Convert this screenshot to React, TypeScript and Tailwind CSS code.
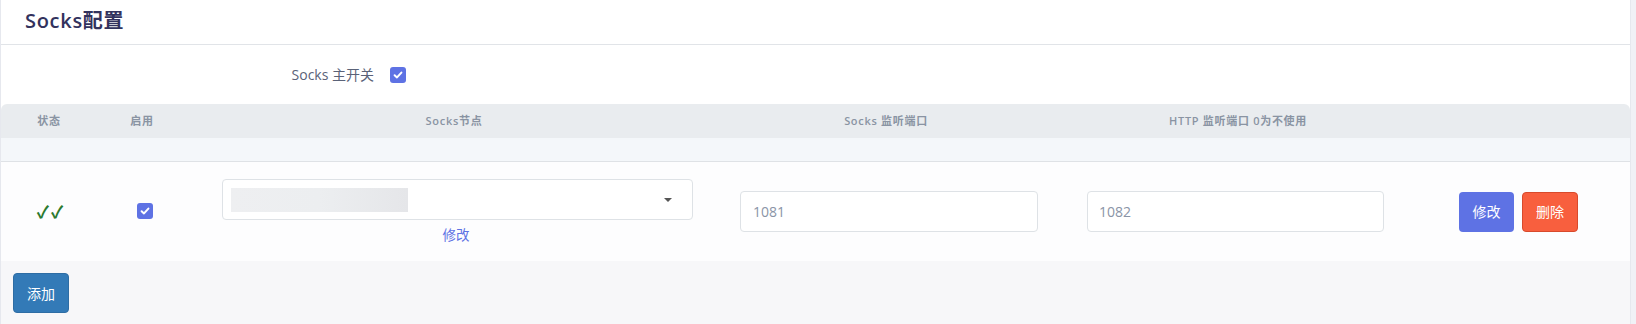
import React from "react";

const font = { fontFamily: '"Open Sans", "Noto Sans CJK SC", sans-serif' };

function Check({ className = "" }: { className?: string }) {
  return (
    <span className={`flex h-4 w-4 items-center justify-center rounded-[3px] bg-[#5e72e4] ${className}`}>
      <svg width="10" height="10" viewBox="0 0 10 10">
        <path d="M1.6 5.2 L4 7.4 L8.4 2.6" fill="none" stroke="white" strokeWidth="2" strokeLinecap="round" strokeLinejoin="round" />
      </svg>
    </span>
  );
}

export default function App() {
  return (
    <div className="h-[324px] w-[1636px] bg-[#f0f1f6]" style={font}>
      <div className="w-[1631px] h-[324px] border-l border-r border-[#e6e8ee] bg-white flex flex-col">
        <div className="h-[45px] border-b border-[#e1e4e8] flex items-center pl-[24px]">
          <span className="text-[20px] font-semibold text-[#32325d] tracking-[0.7px] leading-none mt-[-2px]">Socks配置</span>
        </div>
        <div className="h-[59px] flex items-center">
          <span className="w-[373px] text-right text-[14px] text-[#5a6278]">Socks 主开关</span>
          <Check className="ml-[16px]" />
        </div>
        <div className="h-[34px] bg-[#e9ecef] rounded-t-[6px] flex items-center text-[11px] font-semibold text-[#8a94a3] tracking-[0.7px]">
          <div className="w-[96px] text-center">状态</div>
          <div className="w-[90px] text-center">启用</div>
          <div className="w-[534px] text-center">Socks节点</div>
          <div className="w-[330px] text-center">Socks 监听端口</div>
          <div className="w-[374px] text-center">HTTP 监听端口 0为不使用</div>
        </div>
        <div className="h-[24px] bg-[#f4f7fa] border-b border-[#dfe2e6]" />
        <div className="h-[99px] bg-[#fdfdfe] flex items-center">
          <div className="w-[98px] flex justify-center gap-[2px] text-[#2b7a30] text-[17px] font-semibold pt-[1px]">
            <span>✓</span>
            <span>✓</span>
          </div>
          <div className="w-[92px] flex justify-center">
            <Check className="mt-[-2px]" />
          </div>
          <div className="w-[529px] pl-[31px] pr-[27px] flex flex-col items-center pt-[2px]">
            <div className="w-full h-[41px] rounded-[4px] border border-[#dee2e6] bg-white flex items-center pl-[8px] pr-[20px]">
              <div className="h-[24px] w-[177px] bg-gradient-to-r from-[#eeeff1] via-[#eceef0] to-[#e5e6e9]" />
              <div className="flex-1" />
              <div className="w-0 h-0 border-l-[4px] border-r-[4px] border-t-[4px] border-l-transparent border-r-transparent border-t-[#555]" />
            </div>
            <span className="mt-[5px] text-[13.5px] text-[#5e72e4] ml-[-3px]">修改</span>
          </div>
          <div className="w-[367px] pl-[20px]">
            <div className="h-[41px] w-[298px] rounded-[4px] border border-[#dee2e6] bg-white flex items-center pl-[12px] text-[14px] text-[#8a94a6]">1081</div>
          </div>
          <div className="w-[372px]">
            <div className="h-[41px] w-[297px] rounded-[4px] border border-[#dee2e6] bg-white flex items-center pl-[11px] text-[14px] text-[#8a94a6]">1082</div>
          </div>
          <div className="flex gap-[8px]">
            <button className="h-[40px] w-[55px] rounded-[4px] bg-[#5e72e4] text-white text-[14px]">修改</button>
            <button className="h-[40px] w-[56px] rounded-[4px] bg-[#f85f3e] border border-[#d84a2c] text-white text-[14px]">删除</button>
          </div>
        </div>
        <div className="flex-1 bg-[#f7f7f9] pt-[12px] pl-[12px]">
          <button className="h-[40px] w-[56px] rounded-[4px] bg-[#337ab7] border border-[#2e6da4] text-white text-[14px]">添加</button>
        </div>
      </div>
    </div>
  );
}
